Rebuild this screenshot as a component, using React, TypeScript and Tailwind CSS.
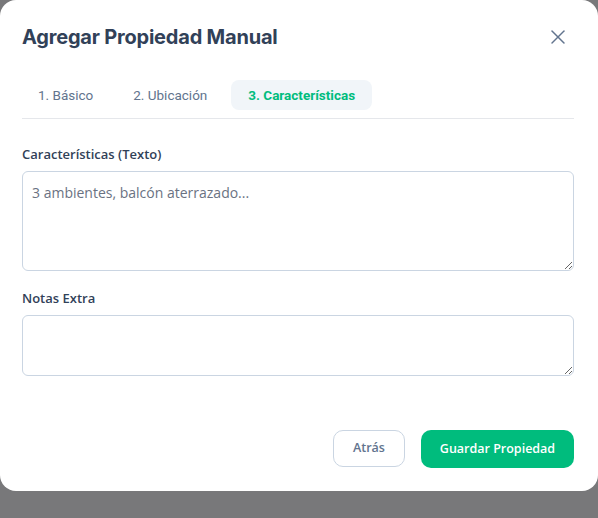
import { X } from "lucide-react";

function App() {
  return (
    <div className="min-h-[518px] w-full bg-[#78787a]" style={{ fontFamily: "'Open Sans', 'Noto Sans', sans-serif" }}>
      <div className="bg-white rounded-2xl pl-[22px] pr-[24px] pt-[23px] pb-[23px]">
        <div className="flex items-center justify-between">
          <h2 className="text-xl leading-7 font-bold text-slate-700 tracking-[-0.2px]" style={{ fontFamily: "Inter, sans-serif" }}>
            Agregar Propiedad Manual
          </h2>
          <button className="text-slate-500 mr-[4px]">
            <X size={24} strokeWidth={1.5} />
          </button>
        </div>

        <div className="mt-[29px] flex gap-2 pb-2 border-b border-gray-200 text-[13.5px]" style={{ fontFamily: "Roboto, sans-serif" }}>
          <button className="h-[30px] px-4 rounded-lg text-slate-500">1. Básico</button>
          <button className="h-[30px] px-4 rounded-lg text-slate-500">2. Ubicación</button>
          <button className="h-[30px] px-[17px] rounded-lg bg-slate-100 text-emerald-500 font-bold">3. Características</button>
        </div>

        <div className="mt-[25px]">
          <label className="block text-[13px] leading-5 font-semibold text-slate-700 mb-[7px]">Características (Texto)</label>
          <textarea
            placeholder="3 ambientes, balcón aterrazado..."
            className="block w-full h-[100px] rounded-md border border-slate-300 px-[9px] py-[10px] text-[14px] text-slate-700 placeholder:text-gray-500 outline-none"
          />
        </div>

        <div className="mt-[17px]">
          <label className="block text-[13px] leading-5 font-semibold text-slate-700 mb-[7px]">Notas Extra</label>
          <textarea className="block w-full h-[61px] rounded-md border border-slate-300 px-[9px] py-[10px] text-[14px] outline-none" />
        </div>

        <div className="mt-[54px] flex justify-end gap-4">
          <button className="h-[37px] w-[72px] rounded-[10px] border border-slate-300 text-slate-500 text-[12.5px] font-semibold">Atrás</button>
          <button className="h-[38px] w-[153px] rounded-[10px] bg-emerald-500 text-white text-[12.5px] font-semibold">Guardar Propiedad</button>
        </div>
      </div>
    </div>
  );
}

export default App;
